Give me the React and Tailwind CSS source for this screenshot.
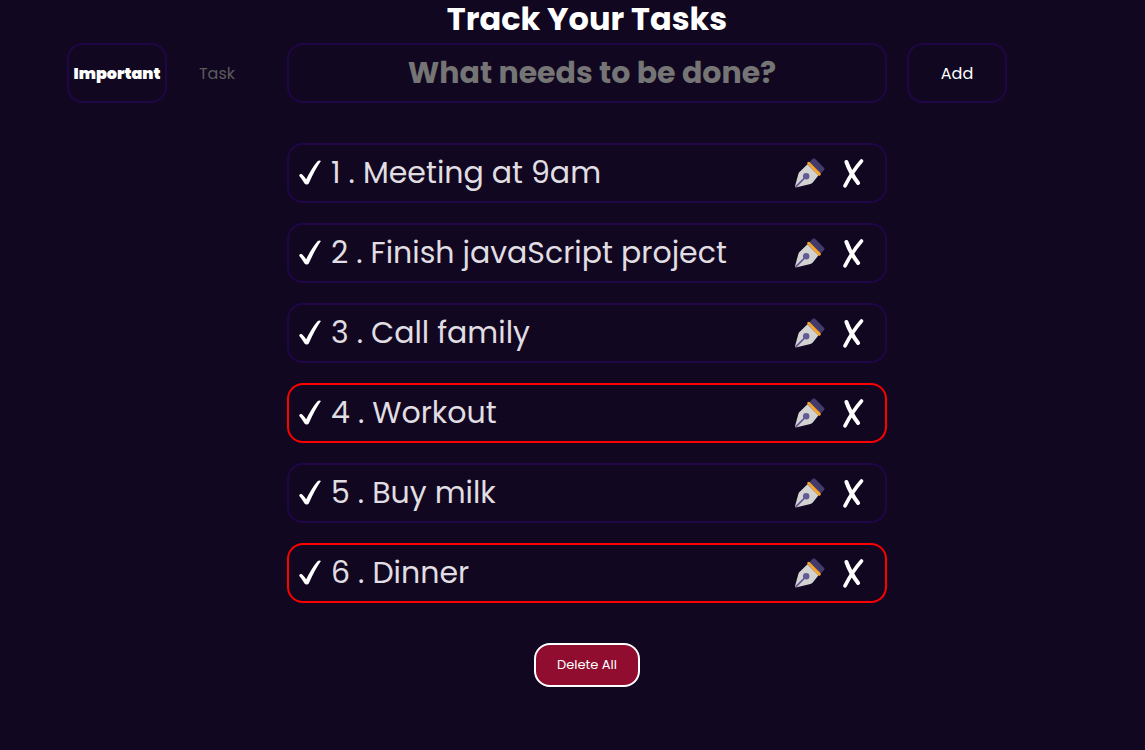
import { useState } from "react";

const tasks = [
  { text: "Meeting at 9am" },
  { text: "Finish javaScript project" },
  { text: "Call family" },
  { text: "Workout", important: true },
  { text: "Buy milk" },
  { text: "Dinner", important: true },
];

function CheckIcon() {
  return (
    <svg viewBox="0 0 24 26" className="h-[26px] w-6" fill="#fff" aria-hidden="true">
      <path d="M1.400 16C.8 14.600 2.500 13.500 4 14.300C5.400 15.500 6.800 17.300 8.200 19.300C11.500 12.500 15.500 6 19.500 1.300C20.500 .2 22.500 .2 22.900 1.100C18.500 7.500 14.600 15 11 22.900C10 24.900 7.700 25 6.500 23.400C4.900 20.800 3.200 18.200 1.400 16Z" />
    </svg>
  );
}

function CrossIcon() {
  return (
    <svg viewBox="0 0 22 30" className="h-[30px] w-[22px]" fill="none" stroke="#fff" strokeLinecap="round" aria-hidden="true">
      <path d="M3.400 4C5.500 10 10.500 19 15.100 25" strokeWidth="4" />
      <path d="M18.500 3C12.500 9.800 6.500 19 2 27.900" strokeWidth="3.600" />
    </svg>
  );
}

function PenIcon() {
  return (
    <svg viewBox="0 0 30 30" className="size-[30px]" aria-hidden="true">
      <path d="M0 28.200L3.400 15.800Q3.900 14 5.500 13L12.500 6.200L23.500 17.200L18.200 24Q17.200 25.500 15.400 26L.8 29.400Z" fill="#d3d3d3" />
      <path d="M.8 28.800L10.500 19" stroke="#635994" strokeWidth="1.700" />
      <circle cx="11.200" cy="18.300" r="3.200" fill="#635994" />
      <path d="M14.500 4L17.600 .8Q18.800 -.3 20 .8L29 9.700Q30 10.800 29.100 11.900L25.700 15.500Z" fill="#433b6b" />
      <path d="M13.700 5.300L24.300 16.100" stroke="#f9a82f" strokeWidth="3" strokeLinecap="round" />
    </svg>
  );
}

export default function App() {
  const [kind, setKind] = useState("important");
  return (
    <main className="flex min-h-screen flex-col items-center bg-[#110720] pl-[29px] font-['Poppins','Inter',sans-serif] text-white">
      <h1 className="pb-[5px] text-[32px] leading-[38px] font-bold">Track Your Tasks</h1>
      <form className="grid w-full grid-cols-[1fr_minmax(0,600px)_1fr] gap-5" onSubmit={(e) => e.preventDefault()}>
        <div className="flex justify-end">
          <button type="button" aria-pressed={kind === "important"} onClick={() => setKind("important")} className="h-[60px] w-[100px] rounded-2xl border-2 border-[#200647] pt-0.5 text-base font-black">
            Important
          </button>
          <button type="button" aria-pressed={kind === "task"} onClick={() => setKind("task")} className="h-[60px] w-[100px] pt-0.5 text-base text-[#5b5b5b]">
            Task
          </button>
        </div>
        <input aria-label="New task" placeholder="What needs to be done?" className="h-[60px] w-full rounded-2xl border-2 border-[#200647] bg-transparent pl-2.5 text-center text-[30px] font-bold placeholder:text-[#757575] outline-none" />
        <button type="submit" className="h-[60px] w-[100px] rounded-2xl border-2 border-[#200647] pt-0.5 text-base">Add</button>
      </form>
      <ul className="mt-10 flex w-full max-w-[600px] flex-col gap-5">
        {tasks.map((task, i) => (
          <li key={task.text} className={`flex h-[60px] items-center rounded-2xl border-2 pr-5 pl-[9px] ${task.important ? "border-[#ff0000]" : "border-[#200647]"}`}>
            <button type="button" aria-label="Complete task" className="mr-[9px]"><CheckIcon /></button>
            <span className="flex-1 text-[30px] leading-10 text-[#e0dee2]">{i + 1} . {task.text}</span>
            <button type="button" aria-label="Edit task" className="mr-[18px]"><PenIcon /></button>
            <button type="button" aria-label="Delete task"><CrossIcon /></button>
          </li>
        ))}
      </ul>
      <button type="button" className="mt-10 mb-10 h-11 w-[106px] rounded-2xl border-2 border-white bg-[#900d30] text-[13px]">Delete All</button>
    </main>
  );
}
